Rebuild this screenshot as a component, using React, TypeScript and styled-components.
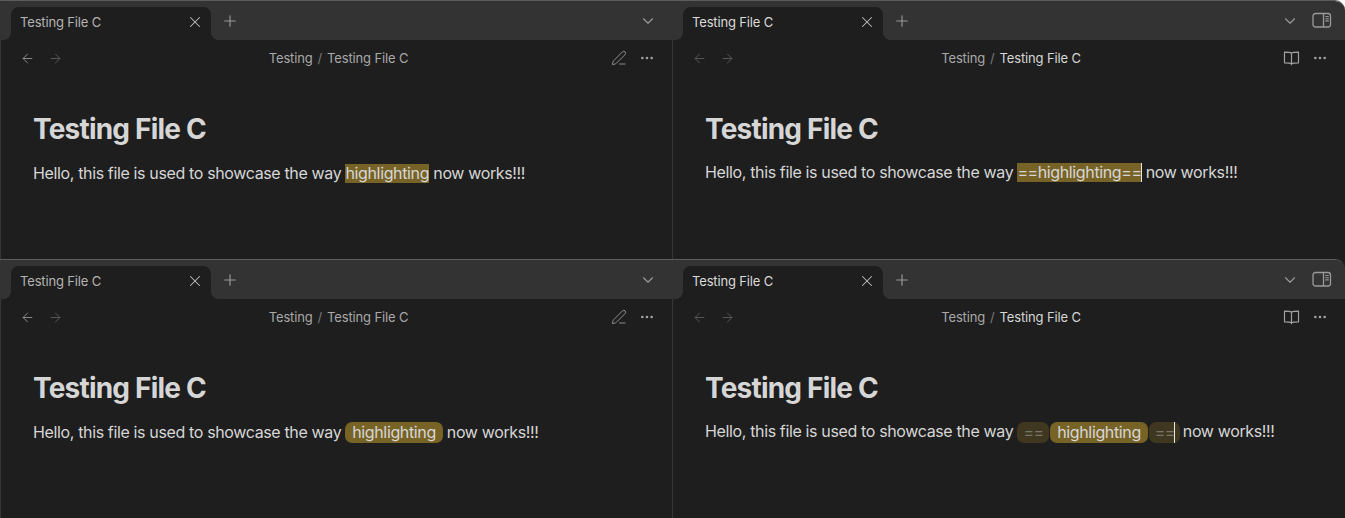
import React from 'react';
import styled, { createGlobalStyle } from 'styled-components';
import { ArrowLeft, ArrowRight, ChevronDown, Ellipsis, PenLine, Plus, X } from 'lucide-react';

const GlobalStyle = createGlobalStyle`
	html, body {
		margin: 0;
		padding: 0;
		background: #1e1e1e;
		font-family: 'Inter', 'Liberation Sans', sans-serif;
		-webkit-font-smoothing: antialiased;
	}
`;

type Mode = 'plain' | 'source' | 'pill' | 'pillSource';

const BookIcon = () => (
	<svg width="17" height="17" viewBox="0 0 17 17" fill="none" stroke="currentColor" strokeWidth="1.2" strokeLinejoin="round">
		<path d="M8.5 3.2C7.4 2.5 6 2.2 1.5 2.2v10.6c4.5 0 5.9.3 7 1 1.1-.7 2.5-1 7-1V2.2c-4.5 0-5.9.3-7 1z" />
		<path d="M8.5 3.2v12" />
	</svg>
);

const SidebarIcon = () => (
	<svg width="20" height="17" viewBox="0 0 20 17" fill="none" stroke="currentColor" strokeWidth="1.3">
		<rect x="1" y="1.5" width="17.5" height="13.5" rx="2.5" />
		<path d="M11.5 1.5v13.5" />
		<path d="M13.3 4.5h3.5M13.3 6.7h3.5M13.3 8.9h3.5" strokeWidth="1.1" />
	</svg>
);

const Line = ({ mode }: { mode: Mode }) => (
	<Paragraph $raised={mode === 'source' || mode === 'pillSource'}>
		Hello, this file is used to showcase the way{' '}
		{mode === 'plain' && <Mark>highlighting</Mark>}
		{mode === 'source' && (
			<Mark $caret><Equals>==</Equals>highlighting<Equals>==</Equals></Mark>
		)}
		{mode === 'pill' && <Pill>highlighting</Pill>}
		{mode === 'pillSource' && (
			<PillGroup>
				<Delimiter><Equals>==</Equals></Delimiter>
				<Pill>highlighting</Pill>
				<Delimiter $caret><Equals>==</Equals></Delimiter>
			</PillGroup>
		)}{' '}
		now works!!!
	</Paragraph>
);

const Pane = ({ mode, active, last }: { mode: Mode; active?: boolean; last?: boolean }) => (
	<PaneBox>
		<TabBar>
			<Tab>
				<TabTitle $active={active}>Testing File C</TabTitle>
				<TabClose><X size={18} strokeWidth={1.4} /></TabClose>
				<TabAdd><Plus size={18} strokeWidth={1.5} /></TabAdd>
			</Tab>
			<BarRight>
				<ChevronDown size={18} strokeWidth={1.5} />
				{last && <SidebarSlot><SidebarIcon /></SidebarSlot>}
			</BarRight>
		</TabBar>
		<View>
			<NavBar>
				<NavArrows>
					<NavIcon $dim={active}><ArrowLeft size={15} strokeWidth={1.5} /></NavIcon>
					<NavIcon $dim><ArrowRight size={15} strokeWidth={1.5} /></NavIcon>
				</NavArrows>
				<Crumbs>
					Testing<Slash>/</Slash><Crumb $active={active}>Testing File C</Crumb>
				</Crumbs>
				<NavActions>
					{active ? <BookIcon /> : <PenLine size={16} strokeWidth={1.3} />}
					<Ellipsis size={16} strokeWidth={2} />
				</NavActions>
			</NavBar>
			<Note>
				<Title>Testing File C</Title>
				<Line mode={mode} />
			</Note>
		</View>
	</PaneBox>
);

const App = () => {
	return (
		<Wrapper>
			<GlobalStyle />
			<WindowRow>
				<Pane mode="plain" />
				<Pane mode="source" active last />
			</WindowRow>
			<WindowRow>
				<Pane mode="pill" />
				<Pane mode="pillSource" active last />
			</WindowRow>
		</Wrapper>
	);
};

const Wrapper = styled.div`
	width: 1345px;
	height: 518px;
	overflow: hidden;
	background: linear-gradient(#ffffff 50%, #1e1e1e 50%);
`;

const WindowRow = styled.div`
	display: grid;
	grid-template-columns: 672px 673px;
	height: 259px;
	box-sizing: border-box;
	border-top: 1px solid #5c5c5c;
	border-top-right-radius: 10px;
	overflow: hidden;
`;

const PaneBox = styled.div`
	display: flex;
	flex-direction: column;
	min-width: 0;
`;

const TabBar = styled.div`
	display: flex;
	justify-content: space-between;
	align-items: flex-end;
	height: 39px;
	flex: none;
	padding-left: 11px;
	background: #333333;
`;

const Tab = styled.div`
	position: relative;
	display: flex;
	align-items: center;
	justify-content: space-between;
	box-sizing: border-box;
	width: 200px;
	height: 33px;
	padding: 0 7px 3px 9px;
	background: #1e1e1e;
	border-radius: 8px 8px 0 0;
	&::before,
	&::after {
		content: '';
		position: absolute;
		bottom: 0;
		width: 7px;
		height: 7px;
	}
	&::before {
		left: -7px;
		background: radial-gradient(circle at 0 0, #333333 6.5px, #1e1e1e 7px);
	}
	&::after {
		right: -7px;
		background: radial-gradient(circle at 100% 0, #333333 6.5px, #1e1e1e 7px);
	}
`;

const TabTitle = styled.span<{ $active?: boolean }>`
	font-size: 13px;
	line-height: 18px;
	letter-spacing: -0.15px;
	color: ${p => (p.$active ? '#dadada' : '#b3b3b3')};
`;

const TabClose = styled.span`
	display: flex;
	color: #bdbdbd;
`;

const TabAdd = styled.span`
	position: absolute;
	left: 210px;
	top: 5px;
	display: flex;
	color: #9a9a9a;
`;

const BarRight = styled.div`
	display: flex;
	align-items: center;
	height: 39px;
	gap: 13px;
	padding-right: 15px;
	color: #9a9a9a;
`;

const SidebarSlot = styled.span`
	display: flex;
	margin-right: -2px;
`;

const View = styled.div`
	flex: 1;
	border-left: 1px solid #363636;
	background: #1e1e1e;
`;

const NavBar = styled.div`
	display: grid;
	grid-template-columns: 1fr auto 1fr;
	align-items: center;
	height: 36px;
	padding: 0 17px 0 19px;
`;

const NavArrows = styled.div`
	display: flex;
	gap: 13px;
`;

const NavIcon = styled.span<{ $dim?: boolean }>`
	display: flex;
	color: ${p => (p.$dim ? '#5a5a5a' : '#8f8f8f')};
`;

const Crumbs = styled.div`
	font-size: 13px;
	letter-spacing: -0.15px;
	color: #a8a8a8;
	transform: translateX(1px);
`;

const Slash = styled.span`
	margin: 0 5px;
	color: #7a7a7a;
`;

const Crumb = styled.span<{ $active?: boolean }>`
	color: ${p => (p.$active ? '#d6d6d6' : '#a8a8a8')};
`;

const NavActions = styled.div`
	display: flex;
	justify-content: flex-end;
	align-items: center;
	gap: 12px;
	color: #a0a0a0;
`;

const Note = styled.div`
	padding: 35px 32px 0;
`;

const Title = styled.h1`
	margin: 0 0 14px;
	font-size: 28px;
	line-height: 36px;
	font-weight: 700;
	letter-spacing: -0.8px;
	color: #d6d6d6;
`;

const Paragraph = styled.p<{ $raised?: boolean }>`
	margin: ${p => (p.$raised ? '-1px' : '0')} 0 0;
	font-size: 16px;
	line-height: 24px;
	letter-spacing: -0.36px;
	color: #d6d6d6;
	white-space: nowrap;
`;

const Equals = styled.span`
	letter-spacing: -0.5px;
`;

const Mark = styled.span<{ $caret?: boolean }>`
	display: inline-block;
	background: #776326;
	line-height: 19px;
	${p => p.$caret && 'box-shadow: inset -1px 0 0 #e8e8e8;'}
`;

const Pill = styled.span`
	display: inline-block;
	padding: 0 6.75px;
	line-height: 21px;
	background: #776326;
	border-radius: 7px;
`;

const PillGroup = styled.span`
	display: inline-flex;
	gap: 1px;
	margin-right: -1px;
	vertical-align: bottom;
`;

const Delimiter = styled.span<{ $caret?: boolean }>`
	display: inline-block;
	position: relative;
	width: 32px;
	box-sizing: border-box;
	padding-left: 6px;
	line-height: 21px;
	background: #3f3720;
	border-radius: 7px;
	color: #77746a;
	${p =>
		p.$caret &&
		`width: 31px;
		&::after {
			content: '';
			position: absolute;
			top: 0;
			bottom: 0;
			right: 5px;
			width: 1px;
			background: #e8e8e8;
		}`}
`;

export default App;
